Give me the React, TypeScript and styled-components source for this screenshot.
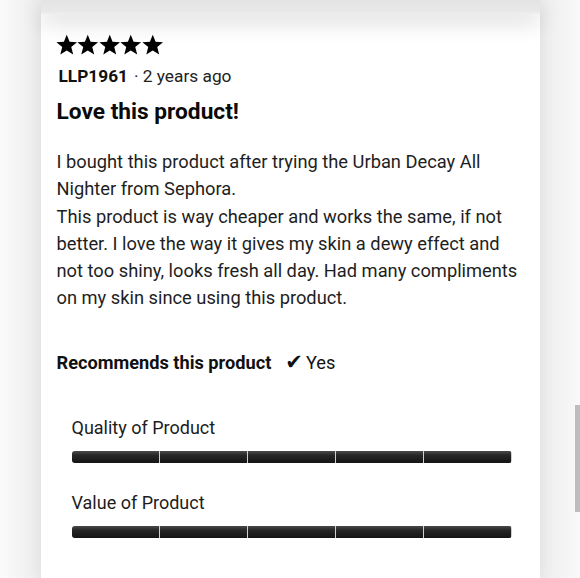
import React from "react";
import styled, { createGlobalStyle } from "styled-components";

const Global = createGlobalStyle`
  html, body { margin: 0; padding: 0; background: #f7f7f7; }
  body { font-family: Roboto, "Liberation Sans", Arial, sans-serif; color: #111; }
`;

const Page = styled.div`
  width: 580px;
  height: 578px;
  overflow: hidden;
  display: flex;
  flex-direction: column;
  align-items: center;
  background: linear-gradient(to right, #fbfbfb 0px, #ececec 40px, #ececec 539px, #f9f9f9 580px);
`;

const PrevCard = styled.div`
  position: relative;
  z-index: 1;
  width: 499px;
  height: 14px;
  flex: none;
  background: linear-gradient(to bottom, #e3e3e3, #e9e9e9 85%, #f0f0f0);
  box-shadow: 0 8px 22px rgba(0, 0, 0, 0.16);
`;

const Card = styled.div`
  width: 499px;
  flex: 1;
  box-sizing: border-box;
  background: #fff;
  padding: 20px 16px 0 16px;
  box-shadow: 0 0 16px rgba(0, 0, 0, 0.06);
`;

const Stars = styled.div`
  display: flex;
  height: 22px;
  margin-left: -1px;
`;

const Star = styled.svg`
  width: 21.5px;
  height: 22px;
  display: block;
`;

const Meta = styled.div`
  margin-top: 9px;
  padding-left: 2px;
  font-size: 17.3px;
  line-height: 22px;
  color: #222;
  display: flex;
  align-items: baseline;
  gap: 6px;
`;

const Author = styled.span`
  font-weight: 700;
  color: #111;
`;

const Title = styled.h2`
  margin: 11px 0 0;
  font-size: 22.7px;
  line-height: 28px;
  font-weight: 700;
  color: #0a0a0a;
`;

const Body = styled.p`
  margin: 22px 0 0;
  font-size: 18.3px;
  line-height: 27.3px;
  color: #1e1e1e;
`;

const Recommend = styled.div`
  margin-top: 38px;
  font-size: 18.2px;
  line-height: 24px;
  display: flex;
  align-items: baseline;
  color: #111;
`;

const RecLabel = styled.span`
  font-weight: 700;
  margin-right: 14px;
`;

const Check = styled.span`
  font-family: "DejaVu Sans", sans-serif;
  font-size: 21px;
  margin-right: 3px;
`;

const Ratings = styled.div`
  margin-top: 41px;
  padding: 0 12px 0 15px;
  display: flex;
  flex-direction: column;
`;

const RatingLabel = styled.div<{ $first?: boolean }>`
  margin-top: ${(p) => (p.$first ? "0" : "28px")};
  font-size: 18px;
  line-height: 24px;
  color: #1c1c1c;
`;

const Bar = styled.div`
  margin-top: 11px;
  height: 12px;
  display: grid;
  grid-template-columns: repeat(5, 1fr);
  gap: 1px;
  background: #d0d0d0;
  border-radius: 3px;
  overflow: hidden;
`;

const Segment = styled.div`
  background: linear-gradient(to bottom, #4a4a4a 0%, #262626 35%, #141414 100%);
`;

const Scrollbar = styled.div`
  position: fixed;
  right: 0;
  top: 405px;
  width: 5px;
  height: 107px;
  background: #bdbdbd;
`;

const starPath = "M11 0.6 L13.9 7.8 L21.6 8.2 L15.6 13.1 L17.6 20.8 L11 16.5 L4.4 20.8 L6.4 13.1 L0.4 8.2 L8.1 7.8 Z";

const ratings = ["Quality of Product", "Value of Product"];

export default function App() {
  return (
    <>
      <Global />
      <Page>
        <PrevCard />
        <Card>
          <Stars>
            {[0, 1, 2, 3, 4].map((i) => (
              <Star key={i} viewBox="0 0 22 22">
                <path d={starPath} fill="#000" />
              </Star>
            ))}
          </Stars>
          <Meta>
            <Author>LLP1961</Author>
            <span>· 2 years ago</span>
          </Meta>
          <Title>Love this product!</Title>
          <Body>
            I bought this product after trying the Urban Decay All Nighter from Sephora.
            <br />
            This product is way cheaper and works the same, if not better. I love the way it gives my skin a dewy effect and not too shiny, looks fresh all day. Had many compliments on my skin since using this product.
          </Body>
          <Recommend>
            <RecLabel>Recommends this product</RecLabel>
            <Check>✔</Check>
            <span>Yes</span>
          </Recommend>
          <Ratings>
            {ratings.map((r, i) => (
              <React.Fragment key={r}>
                <RatingLabel $first={i === 0}>{r}</RatingLabel>
                <Bar>
                  {[0, 1, 2, 3, 4].map((s) => (
                    <Segment key={s} />
                  ))}
                </Bar>
              </React.Fragment>
            ))}
          </Ratings>
        </Card>
        <Scrollbar />
      </Page>
    </>
  );
}
